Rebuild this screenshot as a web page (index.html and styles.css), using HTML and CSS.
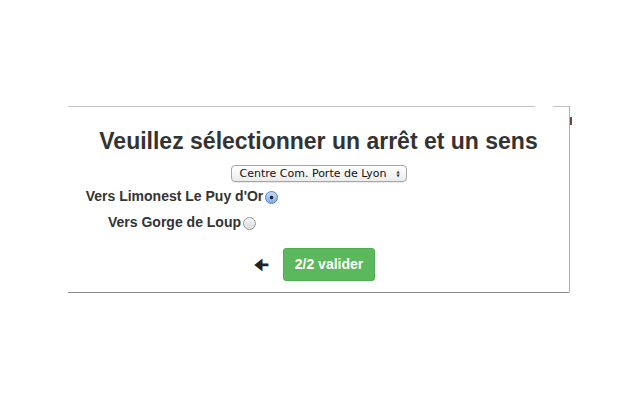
FILE: index.html
```html
<!DOCTYPE html>
<html lang="fr">
<head>
<meta charset="utf-8">
<title>Sélection</title>
<link rel="stylesheet" href="styles.css">
</head>
<body>
<div class="panel">
  <span class="edge-mark"></span>
  <h1 class="title">Veuillez sélectionner un arrêt et un sens</h1>
  <div class="select-row">
    <div class="select">
      <span class="select-text">Centre Com. Porte de Lyon</span>
      <span class="select-arrows">&#9650;<br>&#9660;</span>
    </div>
  </div>
  <div class="directions">
    <label class="dir"><span class="dir-text">Vers Limonest Le Puy d'Or</span><span class="radio checked"></span></label>
    <label class="dir"><span class="dir-text">Vers Gorge de Loup</span><span class="radio"></span></label>
  </div>
  <div class="actions">
    <span class="back">&#129032;</span>
    <span class="btn">2/2 valider</span>
  </div>
</div>
</body>
</html>
```
FILE: styles.css
```css
html, body {
  margin: 0;
  padding: 0;
  background: #fff;
}
body {
  font-family: "Liberation Sans", Arial, Helvetica, sans-serif;
  color: #333;
  padding-top: 106px;
  padding-left: 68px;
}
.panel {
  position: relative;
  width: 502px;
  height: 187px;
  border-top: 1px solid #c4c4c4;
  border-right: 1px solid #b0b0b0;
  border-bottom: 1px solid #8a8a8a;
  border-bottom-right-radius: 2px;
  box-sizing: border-box;
}
.panel::before {
  content: "";
  position: absolute;
  top: -1px;
  left: 467px;
  width: 18px;
  height: 1px;
  background: #fff;
}
.edge-mark {
  position: absolute;
  right: -3px;
  top: 10px;
  width: 2px;
  height: 8px;
  background: #6b4a3a;
}
.title {
  margin: 0;
  padding-top: 20px;
  text-align: center;
  font-size: 23px;
  font-weight: bold;
  line-height: 28px;
  color: #333;
}
.select-row {
  display: flex;
  justify-content: center;
  margin-top: 10px;
}
.select {
  display: flex;
  align-items: center;
  justify-content: space-between;
  width: 176px;
  height: 17px;
  box-sizing: border-box;
  border: 1px solid #a5a5a5;
  border-radius: 4px;
  background: linear-gradient(#ffffff, #ececec);
  padding: 0 6px 0 8px;
  font-family: "DejaVu Sans", "Liberation Sans", sans-serif;
  font-size: 11px;
  color: #111;
  box-shadow: 0 1px 0 rgba(0,0,0,0.08);
}
.select-arrows {
  font-size: 4px;
  line-height: 4px;
  color: #333;
  text-align: center;
}
.directions {
  width: 228px;
  display: flex;
  flex-direction: column;
  align-items: center;
  gap: 10px;
  margin-top: 6px;
}
.dir {
  display: flex;
  align-items: center;
  gap: 2px;
  font-size: 14px;
  font-weight: bold;
  color: #333;
  height: 16px;
}
.radio {
  display: inline-block;
  width: 13px;
  height: 13px;
  box-sizing: border-box;
  border-radius: 50%;
  border: 1px solid #9a9a9a;
  background: linear-gradient(#f4f4f4, #dcdcdc);
  position: relative;
  margin-top: 2px;
}
.radio.checked {
  border-color: #5a7fb8;
  background: radial-gradient(circle at 50% 50%, #1a2640 0 1.6px, transparent 2.1px), linear-gradient(#c7dcf6, #7faee8);
}
.actions {
  display: flex;
  justify-content: center;
  align-items: center;
  margin-top: 18px;
  padding-right: 8px;
  gap: 14px;
}
.back {
  font-family: "DejaVu Sans", sans-serif;
  font-size: 16px;
  font-weight: bold;
  color: #222;
  line-height: 16px;
}
.btn {
  display: inline-block;
  background: #5cb85c;
  border: 1px solid #4cae4c;
  border-radius: 3px;
  color: #fff;
  font-size: 14px;
  font-weight: bold;
  padding: 0 11px;
  height: 33px;
  line-height: 31px;
  box-sizing: border-box;
}
```
